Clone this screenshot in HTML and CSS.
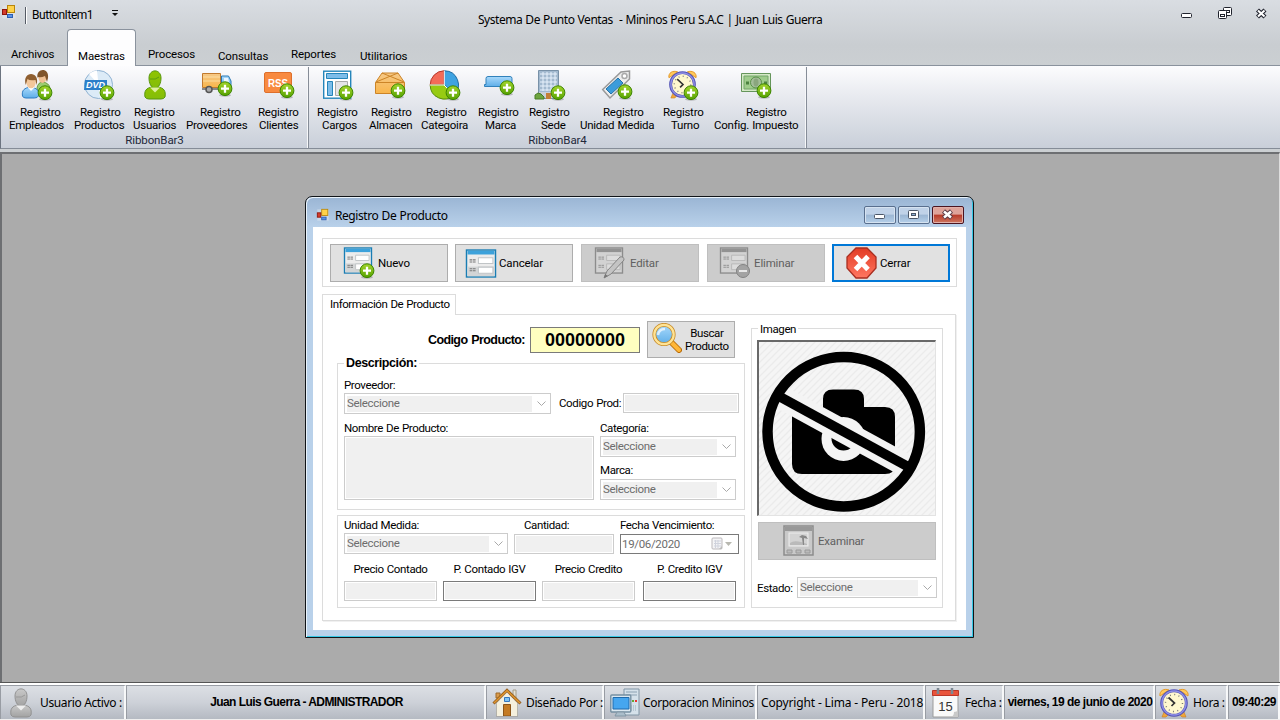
FILE: index.html
```html
<!DOCTYPE html>
<html lang="es">
<head>
<meta charset="utf-8">
<title>Systema De Punto Ventas</title>
<link rel="stylesheet" href="styles.css">
</head>
<body>
<svg class="defs" width="0" height="0">
  <defs>
    <linearGradient id="gGreen" x1="0" y1="0" x2="0" y2="1"><stop offset="0" stop-color="#a4d52c"/><stop offset="1" stop-color="#55a100"/></linearGradient>
    <linearGradient id="gUser" x1="0" y1="0" x2="0" y2="1"><stop offset="0" stop-color="#8fc400"/><stop offset="1" stop-color="#84bd0a"/></linearGradient>
    <linearGradient id="gBlue" x1="0" y1="0" x2="0" y2="1"><stop offset="0" stop-color="#a9d9fb"/><stop offset="1" stop-color="#5eaee8"/></linearGradient>
    <linearGradient id="gBox" x1="0" y1="0" x2="0" y2="1"><stop offset="0" stop-color="#f6c988"/><stop offset="1" stop-color="#f9b54a"/></linearGradient>
    <linearGradient id="gGrey" x1="0" y1="0" x2="0" y2="1"><stop offset="0" stop-color="#c9c9c9"/><stop offset="1" stop-color="#a2a2a2"/></linearGradient>
    <linearGradient id="gRed" x1="0" y1="0" x2="0" y2="1"><stop offset="0" stop-color="#e23c25"/><stop offset="1" stop-color="#ff7660"/></linearGradient>
    <symbol id="plus" viewBox="0 0 16 16"><ellipse cx="8" cy="14.3" rx="6" ry="1.4" fill="#777" opacity=".45"/><circle cx="8" cy="7.7" r="6.9" fill="url(#gGreen)" stroke="#3c8500"/><path d="M8 3.7v8M4 7.7h8" stroke="#fff" stroke-width="2.3"/></symbol>
    <symbol id="app" viewBox="0 0 16 16"><rect x="1.500" y="1.500" width="13" height="13" fill="#e9ecef" opacity=".45"/><rect x="6.500" y="1.500" width="7" height="7" fill="#ffd24a" stroke="#b8860b"/><rect x="1.500" y="5.500" width="4" height="5" fill="#d33b2b" stroke="#8d150c"/><rect x="6.500" y="10.500" width="5" height="3" fill="#5a93e6" stroke="#2d5fb4"/></symbol>
    <symbol id="person" viewBox="0 0 30 30"><path d="M5 27c-1-6 1-9 7-10h6c6 1 8 4 7 10q-1 2-4 2H9q-3 0-4-2z"/><path d="M9 8c0-9.500 12-9.500 12 0 0 5-2 10-6 10S9 13 9 8z"/></symbol>
    <symbol id="clock" viewBox="0 0 30 30"><path d="M5 24l-2 5h4l3-3zM25 24l2 5h-4l-3-3z" fill="#f0a63a" stroke="#c97e20" stroke-width=".6"/><path d="M1 8c-1-5 4-8 9-6zM29 8c1-5-4-8-9-6z" fill="#ffc95c" stroke="#e3982a"/><circle cx="15" cy="15" r="12.300" fill="#fff8cf" stroke="#5353b5" stroke-width="3"/><circle cx="15" cy="15" r="12" fill="none" stroke="#8f8fe6" stroke-width="1.500"/><circle cx="15" cy="15" r="8.500" fill="none" stroke="#777" stroke-width="1.400" stroke-dasharray="1 3.450"/><path d="M9.500 9.500l6 5.500-3 3" fill="none" stroke="#333" stroke-width="1.700"/></symbol>
    <symbol id="form" viewBox="0 0 30 28"><rect x="1" y="1" width="28" height="26" fill="#ececec" stroke="#197db3" stroke-width="1.400"/><path d="M2 17h26v9.300H2z" fill="#d3d5d6"/><path d="M2 1.700h26v3.600H2z" fill="#3da2db"/><path d="M12.500 8.500h14v5.500h-14zM12.500 17.500h14v6h-14z" fill="#fff" stroke="#c1c5c7"/><path d="M4 10.500h6M4 12.500h6M4 19h6M4 21h6" stroke="#777" stroke-dasharray="2.600 .6"/></symbol>
    <symbol id="formGrey" viewBox="0 0 30 28"><rect x="1" y="1" width="28" height="26" fill="#d2d2d2" stroke="#8c8c8c" stroke-width="1.400"/><path d="M2 1.700h26v3.600H2z" fill="#929292"/><path d="M12.500 8.500h14v5.500h-14zM12.500 17.500h14v6h-14z" fill="#dcdcdc" stroke="#b8b8b8"/><path d="M4 10.500h6M4 12.500h6M4 19h6M4 21h6" stroke="#909090" stroke-dasharray="2.600 .6"/></symbol>
  </defs>
</svg>

<div class="app">
  <header class="titlebar">
    <svg class="app-icon"><use href="#app"/></svg>
    <i class="qa-sep"></i>
    <span class="qa-item">ButtonItem1</span>
    <svg class="qa-drop" viewBox="0 0 6 7"><path d="M0 .5h6" stroke="#111"/><path d="M0 3h6L3 6z" fill="#111"/></svg>
    <span class="app-title">Systema De Punto Ventas&nbsp; - Mininos Peru S.A.C | Juan Luis Guerra</span>
    <svg class="sys" viewBox="0 0 100 24">
      <g fill="#fff" stroke="#20232d"><rect x="1.500" y="13.500" width="10" height="4" rx="1"/><rect x="43.500" y="7.500" width="8" height="8" rx="1"/><rect x="45.500" y="10.500" width="4" height="2"/><rect x="38.500" y="10.500" width="8" height="8" rx="1"/><rect x="40.500" y="14.500" width="4" height="2"/></g>
      <path d="M77.500 10l7.500 7M85 10l-7.500 7" stroke="#20232d" stroke-width="4.400"/><path d="M78 10.500l6.500 6M84.500 10.500l-6.500 6" stroke="#fff" stroke-width="2.100"/>
    </svg>
  </header>

  <nav class="tabs">
    <span class="tab t-arc">Archivos</span>
    <span class="tab t-mae active">Maestras</span>
    <span class="tab t-pro">Procesos</span>
    <span class="tab t-con low">Consultas</span>
    <span class="tab t-rep">Reportes</span>
    <span class="tab t-uti low">Utilitarios</span>
  </nav>

  <section class="ribbon">
    <div class="bar bar-a">
      <div class="bar-items">
        <div class="item i-emp"><svg viewBox="0 0 30 30"><path d="M15 18q1-6 6-6 6 1 7 6l-2 5H16z" fill="#9ccc70" stroke="#6a9b41"/><ellipse cx="20.500" cy="7" rx="4.200" ry="6" fill="#efc093"/><path d="M15.500 8c-2-10 12-11 10.500 0l-1 4-2-6q-4 2-7 1z" fill="#80552b"/><path d="M.5 26c-1-6 2-8 8-9 6 1 9 3 8 9q-1 2-4 2H4q-3 0-3.500-2z" fill="url(#gBlue)" stroke="#2d7cc2"/><path d="M5.500 17l3.500 4 4-4z" fill="#fff"/><ellipse cx="9" cy="12" rx="4.800" ry="6.300" fill="#f3c79b"/><path d="M3.700 15C-.5 0 19 1 14.500 15l-1-5q-6 1-8-1z" fill="#8f5f30"/><use href="#plus" x="15" y="15" width="16" height="16"/></svg><span class="l1">Registro</span><span class="l2">Empleados</span></div>
        <div class="item i-prd"><svg viewBox="0 0 30 30"><circle cx="14.500" cy="14.500" r="14" fill="#dcebf7" stroke="#8fb2d2"/><path d="M14.500 14.500L5 4a14 14 0 0 1 8-3.500zM14.500 14.500L24 25a14 14 0 0 1-8 3.500z" fill="#fff"/><path d="M1 10h22v10H0z" fill="#2b7fc9"/><text x="11.500" y="18.200" class="ic-dvd">DVD</text><use href="#plus" x="15" y="15" width="16" height="16"/></svg><span class="l1">Registro</span><span class="l2">Productos</span></div>
        <div class="item i-usu"><svg viewBox="0 0 30 30"><use href="#person" fill="url(#gUser)" stroke="#57960c"/><path d="M10 17.500l5 5 5-5z" fill="#dff0a0"/><path d="M10 9q6 1 9-2" fill="none" stroke="#5c9e10"/></svg><span class="l1">Registro</span><span class="l2">Usuarios</span></div>
        <div class="item i-prv"><svg viewBox="0 0 30 30"><path d="M0.500 3.500h18v14h-18z" fill="url(#gBox)" stroke="#c17a2e"/><path d="M1 7h17M1 11h17" stroke="#fff0c4" opacity=".6"/><path d="M0 19h28" stroke="#888" stroke-width="2"/><path d="M19.500 6h7l2.500 5v8h-9.500z" fill="url(#gBlue)" stroke="#2878b3"/><path d="M22 8h4l1 4h-5z" fill="#eaf6ff"/><circle cx="7" cy="19.500" r="3" fill="#aaa" stroke="#555" stroke-width="1.500"/><use href="#plus" x="15" y="11" width="16" height="16"/></svg><span class="l1">Registro</span><span class="l2">Proveedores</span></div>
        <div class="item i-cli"><svg viewBox="0 0 30 30"><rect x=".5" y="2.500" width="27" height="20" rx="1.500" fill="#f88a40" stroke="#de6f2b"/><text x="14" y="17" class="ic-rss" textLength="20" lengthAdjust="spacingAndGlyphs">RSS</text><use href="#plus" x="15" y="13" width="16" height="16"/></svg><span class="l1">Registro</span><span class="l2">Clientes</span></div>
      </div>
      <div class="bar-name">RibbonBar3</div>
    </div>
    <div class="bar bar-b">
      <div class="bar-items">
        <div class="item i-car"><svg viewBox="0 0 30 30"><rect x=".7" y="1.200" width="27" height="27" fill="#fff" stroke="#2585ba" stroke-width="1.400"/><path d="M3.500 3.500h21v5h-21z" fill="#7dbde9" stroke="#2585ba"/><path d="M4.500 11.500h5v14h-5z" fill="#7dbde9" stroke="#2585ba"/><path d="M12.500 11.500h12v14h-12z" fill="#e4e4e8" stroke="#aaa"/><use href="#plus" x="15" y="15" width="16" height="16"/></svg><span class="l1">Registro</span><span class="l2">Cargos</span></div>
        <div class="item i-alm"><svg viewBox="0 0 30 30"><path d="M.5 12.500L7 3h16l6.500 9.500v11H.5z" fill="url(#gBox)" stroke="#cc8427"/><path d="M.5 12.500h29M1 12L23 3M29 12L7 3" fill="none" stroke="#cc8427"/><use href="#plus" x="15" y="13" width="16" height="16"/></svg><span class="l1">Registro</span><span class="l2">Almacen</span></div>
        <div class="item i-cat"><svg viewBox="0 0 30 30"><path d="M14 15V.8A14 14 0 0 0 .2 15z" fill="#f36b58" stroke="#b7372b"/><path d="M14.500 15V.8A14 14 0 0 1 24 25z" fill="#3fa3e2" stroke="#216ba0"/><path d="M.2 15h14L24 25A14 14 0 0 1 .2 15z" fill="#97cb12" stroke="#568b0b"/><path d="M14.300 1v14M0 15h14l9 9" fill="none" stroke="#fff"/><use href="#plus" x="15" y="15" width="16" height="16"/></svg><span class="l1">Registro</span><span class="l2">Categoira</span></div>
        <div class="item i-mar"><svg viewBox="0 0 30 30"><path d="M4 6.500h22q2 0 2 2v8H.5v-2H2V8.500q0-2 2-2z" fill="url(#gBlue)" stroke="#3081bb"/><use href="#plus" x="15" y="10" width="16" height="16"/></svg><span class="l1">Registro</span><span class="l2">Marca</span></div>
        <div class="item i-sed"><svg viewBox="0 0 30 30"><path d="M3.500.5h20v28h-20z" fill="#a2b9cf" stroke="#7891a8"/><path d="M5 4h17M5 8h17M5 12h17M5 16h17M5 20h17M8 2v19M12 2v19M16 2v19M20 2v19" stroke="#e7f1fc"/><path d="M4 22h19v6H4z" fill="#c9d0d8"/><path d="M11 23h5v6h-5z" fill="#c47e35"/><path d="M0 28v-3l3-2 3 1 3 3v2H0z" fill="#6da43e" stroke="#487c27"/><use href="#plus" x="15" y="15" width="16" height="16"/></svg><span class="l1">Registro</span><span class="l2">Sede</span></div>
        <div class="item i-uni"><svg viewBox="0 0 30 30"><path d="M.7 19.500L19 2l8.500-1v8L8 28z" fill="#ededed" stroke="#999" stroke-width="1.500"/><path d="M4 19L16 8l5 5L9 24z" fill="#3c9cda" stroke="#2573aa"/><circle cx="22.500" cy="6" r="2.500" fill="#fff" stroke="#aaa" stroke-width="1.500"/><use href="#plus" x="15" y="14" width="16" height="16"/></svg><span class="l1">Registro</span><span class="l2">Unidad Medida</span></div>
        <div class="item i-tur"><svg viewBox="0 0 30 30"><use href="#clock" width="29" height="29"/><use href="#plus" x="15" y="15" width="16" height="16"/></svg><span class="l1">Registro</span><span class="l2">Turno</span></div>
        <div class="item i-imp"><svg viewBox="0 0 30 30"><path d="M.5 3.500h29v18H.5z" fill="#d5e9c7" stroke="#65955b"/><path d="M3 6h24v13H3z" fill="#9fcc8c" stroke="#73a568"/><circle cx="15" cy="12.500" r="5.500" fill="#a4bd9a" stroke="#5b914c"/><ellipse cx="15" cy="12.500" rx="2.500" ry="4" fill="#8aa67e"/><path d="M5 11.500h3v3H5zM23 11.500h3v3h-3z" fill="#4d8240"/><use href="#plus" x="15" y="13" width="16" height="16"/></svg><span class="l1">Registro</span><span class="l2">Config. Impuesto</span></div>
      </div>
      <div class="bar-name">RibbonBar4</div>
    </div>
  </section>

  <main class="mdi">
    <section class="window">
      <div class="win-title">
        <svg class="win-icon"><use href="#app"/></svg>
        <span class="win-name">Registro De Producto</span>
        <div class="win-btns">
          <span class="wb"><svg viewBox="0 0 30 16"><rect x="9.500" y="7.500" width="10" height="4" rx="1" fill="#fff" stroke="#4c5768"/></svg></span>
          <span class="wb"><svg viewBox="0 0 30 16"><rect x="9.500" y="3.500" width="10" height="8" rx="1" fill="#fff" stroke="#4c5768"/><rect x="12.500" y="6.500" width="4" height="2" fill="#8eb0d5" stroke="#4c5768"/></svg></span>
          <span class="wb wb-x"><svg viewBox="0 0 30 16"><path d="M10.500 4l8 7M18.500 4l-8 7" stroke="#5b3c46" stroke-width="4.600"/><path d="M11 4.500l7 6M18 4.500l-7 6" stroke="#fff" stroke-width="2.500"/></svg></span>
        </div>
      </div>
      <div class="client">
        <div class="toolbar">
          <div class="btn"><svg class="bi" viewBox="0 0 32 32"><use href="#form" x="0" y="0" width="30" height="27"/><use href="#plus" x="16" y="16" width="16" height="16"/></svg><span>Nuevo</span></div>
          <div class="btn b-can"><svg class="bi" viewBox="0 0 32 32"><use href="#form" x="0" y="2" width="32" height="29"/></svg><span>Cancelar</span></div>
          <div class="btn off b-edi"><svg class="bi" viewBox="0 0 32 32"><use href="#formGrey" x="0" y="0" width="30" height="27"/><path d="M10 31l3-7 13-14q4-1 4 3L17 27z" fill="#c4c4c4" stroke="#858585"/><path d="M10 31l1-4 3 2z" fill="#777"/></svg><span>Editar</span></div>
          <div class="btn off b-eli"><svg class="bi" viewBox="0 0 32 32"><use href="#formGrey" x="0" y="0" width="30" height="27"/><circle cx="24" cy="24" r="6.500" fill="#a3a3a3" stroke="#838383"/><path d="M20 24h8" stroke="#e7e7e7" stroke-width="2"/></svg><span>Eliminar</span></div>
          <div class="btn focus"><svg class="bi" viewBox="0 0 32 32"><path d="M10 1h11l9 9v11l-9 10H10L1 21V10z" fill="url(#gRed)" stroke="#a82e20" stroke-width="1.300"/><path d="M9.500 9.500l12.500 13M22 9.500L9.500 22.500" stroke="#fff" stroke-width="5"/></svg><span>Cerrar</span></div>
        </div>

        <div class="tab-head">Información De Producto</div>
        <div class="page">
          <div class="left">
            <div class="code-row">
              <label class="code-label">Codigo Producto:</label>
              <div class="code-value">00000000</div>
              <div class="search"><svg viewBox="0 0 30 30"><path d="M19 19l8 8" stroke="#b76b08" stroke-width="6" stroke-linecap="round"/><path d="M19 19l8 8" stroke="#ffb637" stroke-width="4" stroke-linecap="round"/><circle cx="12" cy="11.500" r="9.700" fill="url(#gBlue)" stroke="#c68a28" stroke-width="3.800"/><circle cx="12" cy="11.500" r="9.700" fill="none" stroke="#ffe394" stroke-width="2.200"/><path d="M6 12q1-6 7-6" stroke="#fff" stroke-width="2.500" fill="none" opacity=".7"/></svg><span>Buscar<br>Producto</span></div>
            </div>
            <div class="group desc">
              <b class="legend legend-b">Descripción:</b>
              <label>Proveedor:</label>
              <div class="row">
                <div class="select w-prov"><span>Seleccione</span><svg viewBox="0 0 9 5"><path d="M.5.5l4 4 4-4"/></svg></div>
                <label class="lab-cod">Codigo Prod:</label>
                <div class="input w-cod"></div>
              </div>
              <div class="row row-name">
                <div><label>Nombre De Producto:</label><div class="input area"></div></div>
                <div class="col2">
                  <label>Categoría:</label>
                  <div class="select w-cat"><span>Seleccione</span><svg viewBox="0 0 9 5"><path d="M.5.5l4 4 4-4"/></svg></div>
                  <label class="lab-mar">Marca:</label>
                  <div class="select w-cat"><span>Seleccione</span><svg viewBox="0 0 9 5"><path d="M.5.5l4 4 4-4"/></svg></div>
                </div>
              </div>
            </div>
            <div class="group prices">
              <div class="row top">
                <div><label>Unidad Medida:</label><div class="select w-uni"><span>Seleccione</span><svg viewBox="0 0 9 5"><path d="M.5.5l4 4 4-4"/></svg></div></div>
                <div class="qty"><label>Cantidad:</label><div class="input w-qty"></div></div>
                <div class="due"><label>Fecha Vencimiento:</label><div class="date"><span>19/06/2020</span><svg viewBox="0 0 22 14"><rect x="1" y="1" width="10" height="11" rx="1" fill="#f4f4f6" stroke="#bcb9bc"/><path d="M3 4h7M3 6.500h7M3 9h7M4.500 3v8M7 3v8" stroke="#d0d3dd"/><path d="M8 12l3-3v3z" fill="#bbb"/><path d="M14 5h7l-3.500 4z" fill="#b8b8b0"/></svg></div></div>
              </div>
              <div class="row bottom">
                <div class="price"><label>Precio Contado</label><div class="input"></div></div>
                <div class="price"><label>P. Contado IGV</label><div class="input dark"></div></div>
                <div class="price"><label>Precio Credito</label><div class="input"></div></div>
                <div class="price last"><label>P. Credito IGV</label><div class="input dark"></div></div>
              </div>
            </div>
          </div>
          <div class="group image">
            <span class="legend">Imagen</span>
            <div class="picture">
              <svg viewBox="0 0 177 174">
                <defs><pattern id="hatch" width="7" height="7" patternUnits="userSpaceOnUse"><path d="M-1 8L8-1M-2 2l4-4M5 9l4-4" stroke="#ebebeb" stroke-width="1.400"/></pattern></defs>
                <rect width="177" height="174" fill="#f5f5f5"/><rect width="177" height="174" fill="url(#hatch)"/>
                <path d="M64 74V57q0-9.500 10-9.500h21q10 0 10 9.500v8h21q10 0 10 10v47q0 10-10 10H43q-10 0-10-10V73z" fill="#000"/>
                <circle cx="84.500" cy="97" r="22" fill="#f4f4f4"/><circle cx="84.500" cy="96.500" r="12" fill="#000"/>
                <path d="M24 56.400l124 67.800" stroke="#f4f4f4" stroke-width="23"/>
                <path d="M20 54.200l130 71.100" stroke="#000" stroke-width="9.800"/>
                <ellipse cx="84.700" cy="89.800" rx="76.200" ry="74.700" fill="none" stroke="#000" stroke-width="10.500"/>
              </svg>
            </div>
            <div class="btn off browse"><svg class="bi" viewBox="0 0 32 32"><rect x="1" y="1" width="29" height="29" fill="#c9c9c9" stroke="#8c8c8c" stroke-width="1.500"/><path d="M2 2h27v4H2z" fill="#989898"/><rect x="6" y="8" width="19" height="13" fill="#d3d3d3" stroke="#eee"/><path d="M7 18q5-4 17 1v1H7z" fill="#bababa"/><path d="M20 20l-1-7-3-1 3-2 4 1 2 3-4-1v7z" fill="#888"/><path d="M4 25h5v3H4zM13 25h5v3h-5zM22 25h5v3h-5z" fill="#bbb" stroke="#9a9a9a"/></svg><span>Examinar</span></div>
            <div class="row state"><label>Estado:</label><div class="select w-est"><span>Seleccione</span><svg viewBox="0 0 9 5"><path d="M.5.5l4 4 4-4"/></svg></div></div>
          </div>
        </div>
      </div>
    </section>
  </main>

  <footer class="status">
    <div class="cell s1"><svg viewBox="0 0 30 30"><use href="#person" fill="url(#gGrey)" stroke="#929292"/><path d="M10 17.500l5 5 5-5z" fill="#eee"/><path d="M10 9q6 1 9-2" fill="none" stroke="#999"/></svg><span>Usuario Activo :</span></div>
    <div class="cell s2 strong"><span>Juan Luis Guerra - ADMINISTRADOR</span></div>
    <div class="cell s3"><svg viewBox="0 0 30 30"><path d="M5 13h20v15H5z" fill="#efe9d2" stroke="#a8a188"/><path d="M4 5h4v5H4z" fill="#d99b4b" stroke="#9e6829"/><path d="M21 2h3v8h-3z" fill="#e5e1d5" stroke="#a39a84"/><path d="M15 5l10 10v13H5V15z" fill="#f5f0dd"/><path d="M1.500 15.500L15 2.300l13.500 13.200" fill="none" stroke="#935c1d" stroke-width="3"/><path d="M2 15L15 2.500 28 15" fill="none" stroke="#df962f" stroke-width="1.500"/><path d="M11.500 16.500h7V28h-7z" fill="#c47a22" stroke="#8c5519"/><path d="M12.500 9.500h5v4h-5z" fill="#7fc4f6" stroke="#3576be"/><path d="M4 28.500h22" stroke="#aaa"/></svg><span>Diseñado Por :</span></div>
    <div class="cell s4"><svg viewBox="0 0 30 30"><path d="M14 1h15v26H14z" fill="#d5e1ea" stroke="#8195a5"/><path d="M16 4h11M16 7h11" stroke="#8ba1b2"/><path d="M22 12h2v2h-2z" fill="#6a3"/><path d="M25 12h2v2h-2z" fill="#e33"/><path d="M21 18h6M21 20h6M21 22h6" stroke="#9badb9" stroke-dasharray="1 1"/><rect x=".8" y="7" width="20" height="17" rx="1" fill="#dbe7ef" stroke="#7690a2" stroke-width="1.400"/><path d="M3 9.500h16v11.500H3z" fill="#46a6ef" stroke="#206bac"/><path d="M7 24h7l2 4H5z" fill="#aabdca" stroke="#8397a5"/></svg><span>Corporacion Mininos</span></div>
    <div class="cell s5"><span>Copyright - Lima - Peru - 2018</span></div>
    <div class="cell s6"><svg viewBox="0 0 30 30"><path d="M2 3h25v26H2z" fill="#f9f9f9" stroke="#9b9b9b"/><path d="M1.500 2.500h26v5h-26z" fill="#e9543b" stroke="#bb3728"/><path d="M7 0v6M21 0v6" stroke="#7c8892" stroke-width="2.500"/><text x="14.500" y="22.500" class="ic-day">15</text><path d="M20 29q3-1 3-5 3 0 4-2v7z" fill="#c9c9c9"/></svg><span>Fecha :</span></div>
    <div class="cell s7 strong"><span>viernes, 19 de junio de 2020</span></div>
    <div class="cell s8"><svg viewBox="0 0 30 30"><use href="#clock"/></svg><span>Hora :</span></div>
    <div class="cell s9 strong"><span>09:40:29</span></div>
  </footer>
</div>
</body>
</html>
```
FILE: styles.css
```css
* { box-sizing: border-box; }
body { margin: 0; font: 11.5px/13px Roboto, "Liberation Sans", sans-serif; letter-spacing: -.38px; word-spacing: .6px; color: #000; }
.defs { position: absolute; }
svg { display: block; flex: none; }
label { display: block; white-space: nowrap; }
.row { display: flex; }

.app { width: 1280px; height: 720px; overflow: hidden; display: flex; flex-direction: column; background: linear-gradient(#d9dde2 0, #c9cdd1 45px, #cbcfd2 66px); }

/* Title bar and quick access */
.titlebar { height: 29px; display: flex; align-items: flex-start; flex: none; }
.app-icon { width: 16px; height: 16px; margin: 4px 0 0 1px; }
.qa-sep { width: 2px; height: 17px; margin: 7px 0 0 8px; background: #555b65; border-right: 1px solid #fff; }
.qa-item { width: 60px; margin: 9px 0 0 5px; white-space: nowrap; letter-spacing: -.45px; font-size: 12px; }
.qa-drop { width: 6px; height: 7px; margin: 10px 0 0 20px; }
.app-title { width: 344px; margin: 13px 0 0 360px; white-space: nowrap; font: 12px/13px "Noto Sans", sans-serif; letter-spacing: -.47px; word-spacing: .5px; }
.sys { width: 100px; height: 24px; margin: 0 0 0 358px; }

/* Ribbon tabs */
.tabs { height: 37px; display: flex; flex: none; border-bottom: 1px solid #8a929d; letter-spacing: -.13px; }
.tab { height: 37px; padding-top: 19px; white-space: nowrap; }
.low { padding-top: 21px; }
.t-arc { width: 67px; padding-left: 11px; }
.t-mae { width: 69px; padding-left: 10px; }
.t-pro { width: 82px; padding-left: 12px; }
.t-con { width: 73px; }
.t-rep { width: 69px; }
.active { padding-top: 20px; background: #fdfdfe; border: 1px solid #8a929d; border-bottom: 0; border-radius: 4px 4px 0 0; }

.ribbon { height: 83px; flex: none; display: flex; background: linear-gradient(#fcfcfe, #e9ebf0 35%, #c9cfd9); border-bottom: 1px solid #858c97; border-left: 1px solid #6c7480; letter-spacing: -.25px; }
.bar { border-right: 1px solid #868d98; height: 81px; margin-top: 1px; box-shadow: inset -1px 0 #f6f7f9; }
.bar-a { width: 308px; }
.bar-b { width: 498px; }
.bar-items { display: flex; height: 67px; }
.bar-name { text-align: center; line-height: 13px; letter-spacing: -.1px; color: #23283a; }
.item { flex: none; padding-top: 3px; white-space: nowrap; }
.item svg { width: 30px; height: 30px; overflow: visible; }
.item span { display: block; line-height: 13px; }
.item .l1 { margin-top: 6px; }
.i-emp { width: 67px; } .i-emp svg { margin-left: 21px; } .i-emp .l1 { padding-left: 19px; } .i-emp .l2 { padding-left: 8px; }
.i-prd { width: 60px; } .i-prd svg { margin-left: 16px; } .i-prd .l1 { padding-left: 12px; } .i-prd .l2 { padding-left: 6px; }
.i-usu { width: 52px; } .i-usu svg { margin-left: 12px; } .i-usu .l1 { padding-left: 6px; } .i-usu .l2 { padding-left: 5px; }
.i-prv { width: 72px; } .i-prv svg { margin-left: 22px; } .i-prv .l1 { padding-left: 20px; } .i-prv .l2 { padding-left: 6px; }
.i-cli { width: 56px; } .i-cli svg { margin-left: 12px; } .i-cli .l1 { padding-left: 6px; } .i-cli .l2 { padding-left: 7px; }
.i-car { width: 55px; } .i-car svg { margin-left: 14px; } .i-car .l1 { padding-left: 8px; } .i-car .l2 { padding-left: 13px; }
.i-alm { width: 52px; } .i-alm svg { margin-left: 11px; } .i-alm .l1 { padding-left: 7px; } .i-alm .l2 { padding-left: 5px; }
.i-cat { width: 57px; } .i-cat svg { margin-left: 14px; } .i-cat .l1 { padding-left: 10px; } .i-cat .l2 { padding-left: 5px; }
.i-mar { width: 51px; } .i-mar svg { margin-left: 11px; } .i-mar .l1 { padding-left: 5px; } .i-mar .l2 { padding-left: 12px; }
.i-sed { width: 51px; } .i-sed svg { margin-left: 11px; } .i-sed .l1 { padding-left: 5px; } .i-sed .l2 { padding-left: 17px; }
.i-uni { width: 83px; } .i-uni svg { margin-left: 27px; } .i-uni .l1 { padding-left: 28px; } .i-uni .l2 { padding-left: 5px; }
.i-tur { width: 50px; } .i-tur svg { margin-left: 10px; } .i-tur .l1 { padding-left: 5px; } .i-tur .l2 { padding-left: 13px; }
.i-imp { width: 97px; } .i-imp svg { margin-left: 33px; } .i-imp .l1 { padding-left: 38px; } .i-imp .l2 { padding-left: 6px; }
.ic-dvd { font: italic bold 9px "Liberation Sans", sans-serif; fill: #fff; text-anchor: middle; letter-spacing: 0; }
.ic-rss { font: bold 11.5px "Liberation Sans", sans-serif; fill: #fff; text-anchor: middle; letter-spacing: 0; }
.ic-day { font: 13px "Liberation Sans", sans-serif; fill: #333; text-anchor: middle; letter-spacing: 0; }

/* Workspace */
.mdi { height: 530px; flex: none; margin-top: 3px; border: 2px solid #6d6f72; border-width: 2px 1px 0 2px; border-right-color: #ddd; background: #ababab; padding: 42px 0 0 303px; }
.window { width: 669px; height: 442px; border: 1px solid #101418; border-radius: 7px 7px 0 0; background: linear-gradient(#9ab5d4, #b9d1ea 30px); box-shadow: inset 1px 1px #eaf3fb, inset -1px -1px #35c8e6; padding: 0 7px 7px; }
.win-title { height: 30px; display: flex; }
.win-icon { width: 14px; height: 14px; margin: 11px 0 0 3px; }
.win-name { width: 113px; margin: 12px 0 0 5px; white-space: nowrap; font: 12px/13px "Noto Sans", sans-serif; letter-spacing: -.43px; }
.win-btns { display: flex; gap: 2px; margin: 9px 0 0 416px; }
.wb { width: 32px; height: 18px; border: 1px solid #596f8e; border-radius: 2px; background: linear-gradient(#c0d2e8 45%, #9bb6d3 50%, #b6d0ea); box-shadow: inset 0 0 0 1px #d6e3f1; }
.wb svg { width: 30px; height: 16px; }
.wb-x { border-color: #4b1420; background: linear-gradient(#dea39a 45%, #b83a29 50%, #cd7761); box-shadow: inset 0 0 0 1px #e2b0aa; }
.client { width: 653px; height: 403px; background: #fff; padding: 11px 9px 0; }
.toolbar { width: 635px; height: 49px; border: 1px solid #dcdcdc; padding: 5px 0 0 7px; display: flex; gap: 7px; letter-spacing: -.15px; }
.btn { width: 118px; height: 38px; display: flex; align-items: center; flex: none; border: 1px solid #adadad; background: #e1e1e1; padding-left: 12px; }
.bi { width: 32px; height: 32px; margin-right: 3px; }
.b-can { padding-left: 9px; }
.b-can .bi { margin-right: 2px; }
.b-edi { margin-left: 1px; }
.b-edi .bi { margin-right: 4px; }
.b-eli { padding-left: 11px; margin-left: 1px; }
.off { background: #ccc; border-color: #bfbfbf; color: #606060; }
.focus { border: 2px solid #0078d7; }
.focus .bi { margin-right: 2px; }

.tab-head { width: 134px; height: 21px; margin-top: 7px; border: 1px solid #dcdcdc; border-bottom: 0; background: #fff; padding: 3px 0 0 7px; white-space: nowrap; position: relative; z-index: 1; letter-spacing: -.42px; }
.page { width: 634px; height: 307px; margin-top: -1px; border: 1px solid #dcdcdc; box-shadow: 1px 1px #f0f0f0; display: flex; padding: 6px 0 0 14px; }
.left { width: 408px; margin-right: 6px; }
.code-row { display: flex; height: 37px; }
.code-label { width: 98px; margin: 13px 0 0 91px; font: bold 12.5px/13px "Liberation Sans", sans-serif; letter-spacing: -.6px; word-spacing: 1px; }
.code-value { width: 110px; height: 26px; margin: 6px 0 0 4px; border: 1px solid #7a7a7a; background: #ffffc0; text-align: center; font: bold 18px/25px "Liberation Sans", sans-serif; letter-spacing: 0; }
.search { width: 88px; height: 37px; margin-left: 7px; border: 1px solid #adadad; background: #e1e1e1; display: flex; align-items: center; text-align: center; }
.search svg { width: 30px; height: 30px; margin: -3px 3px 0 4px; }
.group { border: 1px solid #dcdcdc; }
.legend { display: block; width: max-content; background: #fff; height: 13px; margin: -7px 0 0 6px; padding: 0 2px; }
.legend-b { font: bold 12.5px/13px "Liberation Sans", sans-serif; letter-spacing: -.4px; }
.desc { height: 147px; margin-top: 5px; padding-left: 6px; }
.desc .legend { margin-left: 0; margin-bottom: 9px; }
.desc > .row { margin-top: 1px; }
.select { height: 21px; border: 1px solid #ccc; background: #fff; display: flex; align-items: center; justify-content: space-between; padding: 0 4px 0 2px; color: #6d6d6d; }
.select span { flex: 1; height: 16px; margin-right: 5px; background: #f0f0f0; line-height: 15px; letter-spacing: -.3px; }
.select svg { width: 9px; height: 5px; fill: none; stroke: #a9a9a9; }
.input { height: 20px; border: 1px solid #ccc; background: #f0f0f0; box-shadow: inset 0 0 0 1px #fff; }
.dark { border-color: #7a7a7a; }
.w-prov { width: 207px; }
.lab-cod { width: 64px; margin: 4px 0 0 8px; }
.w-cod { width: 116px; }
.desc > .row-name { margin-top: 8px; }
.row-name label { margin-bottom: 1px; }
.area { width: 250px; height: 64px; }
.col2 { margin-left: 6px; }
.w-cat { width: 136px; }
.row-name .lab-mar { margin: 7px 0 2px; }
.prices { height: 93px; margin-top: 5px; padding: 3px 0 0 6px; }
.prices .top { height: 44px; }
.w-uni { width: 164px; margin-top: 1px; }
.qty { margin-left: 6px; }
.qty label { padding-left: 10px; }
.w-qty { width: 100px; margin-top: 2px; }
.due { margin-left: 6px; }
.date { width: 119px; height: 20px; margin-top: 2px; border: 1px solid #7a7a7a; display: flex; justify-content: space-between; align-items: center; padding: 0 5px 0 1px; color: #6d6d6d; letter-spacing: -.33px; }
.date svg { width: 22px; height: 14px; }
.bottom { gap: 6px; }
.price { width: 93px; text-align: center; }
.price .input { margin-top: 5px; }
.last { margin-left: 2px; }
.image { width: 192px; height: 280px; margin-top: 7px; padding-left: 5px; }
.image .legend { margin: -6px 0 0 1px; }
.picture { width: 179px; height: 176px; margin-top: 4px; border: 1px solid #e3e3e3; border-top: 2px solid #696969; border-left: 2px solid #696969; overflow: hidden; }
.picture svg { width: 177px; height: 174px; }
.browse { width: 178px; margin: 6px 0 0 1px; padding-left: 24px; letter-spacing: -.2px; }
.state { margin-top: 17px; }
.state label { width: 40px; padding-top: 5px; }
.w-est { width: 140px; }

/* Status bar */
.status { height: 37px; flex: none; border-top: 2px solid #fff; padding-top: 0; display: flex; background: linear-gradient(#dde0e5, #cdd1d8 50%, #b3b8c1); box-shadow: 0 -1px #555, inset 0 -1px #eee; font: 12px/13px "Noto Sans", sans-serif; letter-spacing: -.37px; word-spacing: 0; margin-top: 1px; }
.cell { height: 34px; border-left: 1px solid #989ca3; border-right: 2px solid #f7f8f9; border-top: 1px solid #999da5; flex: none; display: flex; align-items: center; white-space: nowrap; }
.cell svg { width: 30px; height: 30px; }
.strong { font-family: "Liberation Sans", sans-serif; font-weight: bold; letter-spacing: -.5px; justify-content: center; }
.s1 { width: 126px; padding-left: 5px; } .s1 span { margin-left: 4px; }
.s2 { width: 360px; letter-spacing: -.57px; } .s2 span { margin-left: 2px; }
.s3 { width: 118px; padding-left: 5px; } .s3 span { margin-left: 4px; }
.s4 { width: 153px; padding-left: 5px; letter-spacing: -.34px; } .s4 span { margin-left: 3px; }
.s5 { width: 168px; padding-left: 3px; letter-spacing: -.15px; }
.s6 { width: 79px; padding-left: 5px; } .s6 span { margin-left: 4px; }
.s7 { width: 151px; } .s7 span { margin-left: 2px; }
.s8 { width: 73px; padding-left: 3px; } .s8 span { margin-left: 4px; }
.s9 { width: 52px; } .s9 span { margin-left: 1px; }
```
